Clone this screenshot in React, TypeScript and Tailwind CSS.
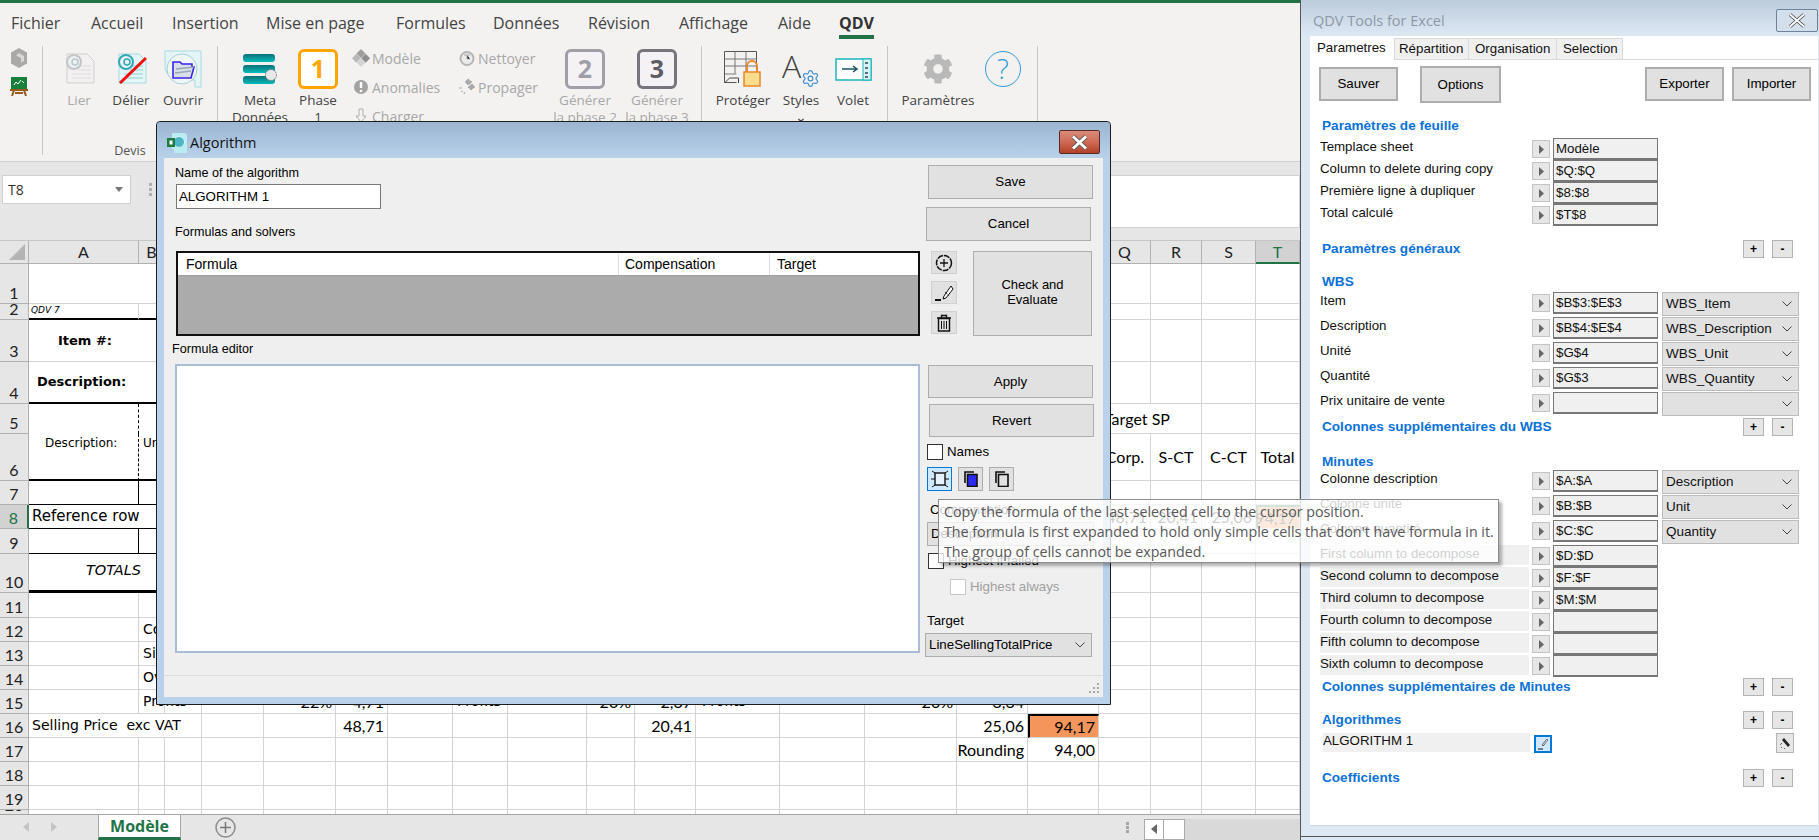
import type { ReactNode } from 'react'
import { FaCog } from 'react-icons/fa'
import { Settings } from 'lucide-react'

const sans = "font-['Liberation_Sans',Arial,sans-serif]"
const ui = "font-['Open_Sans',sans-serif]"

const COLS = 'ABCDEFGHIJKLMNOPQRST'.split('')
const ROWS = Array.from({ length: 20 }, (_, i) => i + 1)
const num = "justify-end items-center pr-[3px] font-['Lato'] text-[16px]"
const lato = "items-center font-['Lato'] text-[16px]"
const deja = "items-center font-['DejaVu_Sans'] text-[14px]"

// cell text, keyed by row-column (A = 0)
const CELLS: Record<string, { t: string; cls: string }> = {
  '2-0': { t: 'QDV 7', cls: "items-center pl-[2px] italic font-['DejaVu_Sans'] text-[9px]" },
  '3-0': { t: 'Item #:', cls: "items-center pl-[29px] font-bold font-['DejaVu_Sans'] text-[13px]" },
  '4-0': { t: 'Description:', cls: "items-center pl-[8px] pb-[1px] font-bold font-['DejaVu_Sans'] text-[13px]" },
  '6-0': { t: 'Description:', cls: "items-start pl-[16px] font-['DejaVu_Sans'] text-[12px]" },
  '6-1': { t: 'Unité', cls: "items-start pl-[4px] font-['DejaVu_Sans'] text-[12px]" },
  '8-0': { t: 'Reference row', cls: "items-center pl-[3px] font-['DejaVu_Sans'] text-[15px]" },
  '10-0': { t: 'TOTALS', cls: "items-center pl-[57px] pb-[2px] italic font-['DejaVu_Sans'] text-[14.5px]" },
  '12-1': { t: 'Costs', cls: `${deja} pl-[4px]` },
  '13-1': { t: 'Site', cls: `${deja} pl-[4px]` },
  '14-1': { t: 'Overhead', cls: `${deja} pl-[4px]` },
  '15-1': { t: 'Profits', cls: `${deja} pl-[4px]` },
  '15-4': { t: '22%', cls: num },
  '15-5': { t: '4,71', cls: num },
  '15-7': { t: 'Profits', cls: `${deja} pl-[4px]` },
  '15-9': { t: '20%', cls: num },
  '15-10': { t: '2,37', cls: num },
  '15-11': { t: 'Profits', cls: `${deja} pl-[6px]` },
  '15-13': { t: '20%', cls: num },
  '15-14': { t: '3,34', cls: num },
  '16-0': { t: 'Selling Price  exc VAT', cls: `${deja} pl-[3px] whitespace-pre text-[14.5px]` },
  '16-5': { t: '48,71', cls: num },
  '16-10': { t: '20,41', cls: num },
  '16-14': { t: '25,06', cls: num },
  '16-15': { t: '94,17', cls: `${num} bg-[#f4965b] border-2 border-black` },
  '17-14': { t: 'Rounding', cls: num },
  '17-15': { t: '94,00', cls: num },
  '5-16': { t: 'Target SP', cls: `${lato} pl-[5px]` },
  '6-16': { t: 'Corp.', cls: `${lato} justify-end pr-[6px]` },
  '6-17': { t: 'S-CT', cls: `${lato} justify-center` },
  '6-18': { t: 'C-CT', cls: `${lato} justify-center` },
  '6-19': { t: 'Total', cls: `${lato} justify-center` },
  '8-16': { t: '48,71', cls: num },
  '8-17': { t: '20,41', cls: num },
  '8-18': { t: '25,06', cls: num },
  '8-19': { t: '94,17', cls: `${num} bg-[#f4965b] border-2 border-[#217346]` },
}

function rightBorder(r: number, c: number) {
  if (c === 0) {
    if (r === 5 || r === 6) return 'border-r border-r-black [border-right-style:dashed]'
    if (r === 7 || r === 9) return 'border-r border-r-black'
    if (r === 2 || (r >= 11 && r <= 15) || r >= 17) return 'border-r border-r-[#d4d4d4]'
    return ''
  }
  if (c === 1 && r === 16) return ''
  if (c === 16 && r === 5) return ''
  return 'border-r border-r-[#d4d4d4]'
}

function bottomBorder(r: number, c: number) {
  if (r === 5 && c < 16) return ''
  if (c < 16) {
    if (r === 2 || r === 4 || r === 6) return 'border-b-2 border-b-black'
    if (r === 10) return 'border-b-[3px] border-b-black'
    if (r === 7 || r === 8 || r === 9) return 'border-b border-b-black'
  }
  return 'border-b border-b-[#d4d4d4]'
}

function Sheet() {
  return (
    <div className="h-[575px] bg-white overflow-hidden grid grid-cols-[29px_110px_26px_37px_62px_72px_52px_65px_55px_79px_48px_61px_84px_85px_92px_71px_71px_52px_51px_54px_44px] grid-rows-[23px_40px_16px_42px_42px_30px_47px_24px_24px_25px_39px_25px_24px_24px_24px_24px_24px_24px_24px_24px_6px] text-black">
      <div className="bg-[#e6e6e6] border-r border-b border-[#b1b1b1] flex items-end justify-end p-[3px]">
        <svg width="16" height="16" viewBox="0 0 16 16"><path d="M16 0v16H0z" fill="#b4b4b4" /></svg>
      </div>
      {COLS.map(c => (
        <div
          key={c}
          className={`flex items-center justify-center font-['Lato'] text-[16px] border-r border-b ${
            c === 'T' ? 'bg-[#d2d2d2] text-[#217346] border-[#b1b1b1] border-b-2 border-b-[#217346]' : 'bg-[#e6e6e6] text-[#222] border-[#b1b1b1]'
          }`}
        >
          {c}
        </div>
      ))}
      {ROWS.map(r => [
        <div
          key={`h${r}`}
          className={`flex items-end justify-center overflow-hidden font-['Lato'] text-[16px] leading-[21px] border-b border-[#b1b1b1] ${
            r === 8 ? 'bg-[#d2d2d2] text-[#217346] border-r-2 border-r-[#217346]' : 'bg-[#e6e6e6] text-[#222] border-r'
          }`}
        >
          {r}
        </div>,
        ...COLS.map((_, c) => {
          const cell = CELLS[`${r}-${c}`]
          return (
            <div key={`${r}-${c}`} className={`flex whitespace-nowrap min-w-0 ${rightBorder(r, c)} ${bottomBorder(r, c)} ${cell ? cell.cls : ''}`}>
              {cell?.t}
            </div>
          )
        }),
      ])}
    </div>
  )
}

function PageIcon({ mode }: { mode: 'off' | 'unlink' | 'open' }) {
  const edge = mode === 'off' ? '#cfcfcf' : '#a5dbe0'
  const fill = mode === 'off' ? '#f2f0f0' : '#e4f5f6'
  const ring = mode === 'off' ? '#c5c5c5' : '#35a7b5'
  if (mode === 'open') {
    return (
      <svg width="38" height="38" viewBox="0 0 38 38">
        <path d="M1 1h36v36h-6V30H20C9 30 1 26 1 15z" fill={fill} stroke={edge} />
        <circle cx="18" cy="19" r="15" fill="#eef6f7" stroke="#a5cfd6" />
        <path d="M9 12h7l2 2h10v3h2l-3 11H9z" fill="#d7dfe9" stroke="#3b22e8" strokeWidth="1.6" />
        <path d="M12 19l18-2M11 23l16-2" stroke="#9aa7b5" strokeWidth="1.5" />
      </svg>
    )
  }
  return (
    <svg width="31" height="31" viewBox="0 0 31 31">
      <path d="M3 1h20l7 7v22H3z" fill={fill} stroke={edge} />
      <path d="M14 13h13M14 17h13M8 21h19M8 25h19" stroke={mode === 'off' ? '#dedede' : '#8ad3dc'} />
      <circle cx="10" cy="9" r="7" fill="#e6f3f5" stroke={ring} strokeWidth="2" />
      <circle cx="11" cy="9" r="3" fill="none" stroke={ring} strokeWidth="1.5" />
      {mode === 'unlink' && <path d="M4 30L30 5" stroke="#f01010" strokeWidth="3" />}
    </svg>
  )
}

function MetaIcon() {
  return (
    <svg width="34" height="30" viewBox="0 0 34 30">
      <defs>
        <linearGradient id="meta" x1="0" y1="0" x2="0" y2="1">
          <stop offset="0" stopColor="#0c6f78" />
          <stop offset="1" stopColor="#04bcb8" />
        </linearGradient>
      </defs>
      <rect x="0" y="0" width="32" height="8" rx="3" fill="url(#meta)" />
      <rect x="0" y="11" width="32" height="8" rx="3" fill="url(#meta)" />
      <rect x="0" y="22" width="32" height="8" rx="3" fill="url(#meta)" />
      <circle cx="28" cy="21" r="5.5" fill="#e8e8e8" stroke="#777" strokeDasharray="1.5 1" />
    </svg>
  )
}

function LockGridIcon() {
  return (
    <svg width="38" height="36" viewBox="0 0 38 36">
      <path d="M.5.5h32v21M.5.5v31h12" fill="none" stroke="#555" />
      <path d="M11 .5v22M22 .5v22M.5 8h32M.5 15h32M.5 23h12" stroke="#777" />
      <path d="M.5 32l5-5h9v5" fill="none" stroke="#444" />
      <path d="M23 21v-6a5 5 0 0 1 10 0v6" fill="none" stroke="#e8882a" strokeWidth="2" />
      <rect x="20" y="21" width="16" height="14" fill="#f9dc8c" stroke="#e8882a" strokeWidth="1.5" />
    </svg>
  )
}

function VoletIcon() {
  return (
    <svg width="37" height="24" viewBox="0 0 37 24">
      <rect x="1" y="2" width="35" height="21" fill="#fff" stroke="#1bb5bd" strokeWidth="1.5" />
      <rect x="28" y="2" width="8" height="21" fill="#d6f2f3" stroke="#1bb5bd" />
      <path d="M30 6h3M30 11h3M30 16h3M30 20h3" stroke="#345" strokeWidth="1.5" />
      <path d="M7 12h15m-4-3l4 3-4 3" fill="none" stroke="#1d5560" strokeWidth="1.5" />
    </svg>
  )
}

function SmallIcon({ kind }: { kind: 'model' | 'warn' | 'load' | 'clean' | 'spread' }) {
  if (kind === 'warn') {
    return (
      <svg width="16" height="16" viewBox="0 0 16 16">
        <circle cx="8" cy="8" r="7" fill="#a3a3a3" />
        <path d="M8 3v6" stroke="#fff" strokeWidth="2.4" />
        <circle cx="8" cy="12" r="1.3" fill="#fff" />
      </svg>
    )
  }
  if (kind === 'clean') {
    return (
      <svg width="16" height="16" viewBox="0 0 16 16">
        <circle cx="8" cy="8.5" r="6.5" fill="#ebebeb" stroke="#b5b5b5" strokeWidth="2" />
        <path d="M5 5h6M8 5v4h3" stroke="#aaa" />
      </svg>
    )
  }
  if (kind === 'load') {
    return (
      <svg width="12" height="16" viewBox="0 0 12 16">
        <path d="M4 1h4v7h3l-5 6-5-6h3z" fill="#f3f2f1" stroke="#b0b0b0" />
      </svg>
    )
  }
  if (kind === 'spread') {
    return (
      <svg width="18" height="18" viewBox="0 0 18 18">
        <path d="M10 1l4 3-4 3-3-3zM14 6l3 3-4 3-3-3z" fill="#aaa" stroke="#999" strokeDasharray="1 1" />
        <path d="M1 10h3M3 13l2 1M6 16l1-2" stroke="#aaa" />
      </svg>
    )
  }
  return (
    <svg width="18" height="18" viewBox="0 0 18 18">
      <path d="M9 0l4.5 4.5L9 9 4.500 4.500z" fill="#9d9d9d" />
      <path d="M4.300 4.700L8.800 9.200 4.300 13.700 0 9.200z" fill="#b8b8b8" />
      <path d="M13.700 4.700L18 9.200l-4.300 4.500-4.500-4.500z" fill="#8f8f8f" />
      <path d="M9 9.400l4.300 4.400L9 18l-4.300-4.200z" fill="#d4d4d4" />
    </svg>
  )
}

function RibbonBtn({ w, icon, label, off }: { w: string; icon: ReactNode; label: ReactNode; off?: boolean }) {
  return (
    <div className={`${w} flex flex-col items-center leading-[17px] whitespace-nowrap ${off ? 'text-[#a8a8a8]' : 'text-[#444]'}`}>
      <div className="h-[46px] flex items-center justify-center">{icon}</div>
      {label}
    </div>
  )
}

function NumBox({ n, color, text, bg }: { n: string; color: string; text: string; bg: string }) {
  return (
    <div className={`w-[40px] h-[40px] rounded-[6px] border-[3px] flex items-center justify-center text-[25px] font-bold ${color} ${text} ${bg}`}>
      {n}
    </div>
  )
}

function SmallRow({ kind, label }: { kind: 'model' | 'warn' | 'load' | 'clean' | 'spread'; label: string }) {
  return (
    <div className="h-[29px] flex items-center text-[#a8a8a8] text-[14px] whitespace-nowrap">
      <span className="w-[22px] flex justify-center"><SmallIcon kind={kind} /></span>
      {label}
    </div>
  )
}

function Ribbon() {
  const tabs: [string, string][] = [
    ['Fichier', 'w-[80px]'], ['Accueil', 'w-[81px]'], ['Insertion', 'w-[94px]'], ['Mise en page', 'w-[130px]'],
    ['Formules', 'w-[97px]'], ['Données', 'w-[95px]'], ['Révision', 'w-[91px]'], ['Affichage', 'w-[99px]'], ['Aide', 'w-[61px]'],
  ]
  return (
    <div className={`h-[160px] bg-[#f3f2f1] border-b border-[#d2d0ce] overflow-hidden ${ui} text-[13.5px]`}>
      <div className="h-[43px] flex pl-[11px] pt-[10px] text-[16px] text-[#444] leading-[20px]">
        {tabs.map(([t, w]) => <div key={t} className={w}>{t}</div>)}
        <div className="h-[26px] border-b-4 border-[#217346] font-bold text-[#333]">QDV</div>
      </div>
      <div className="flex h-[109px]">
        <div className="w-[43px] border-r border-[#c8c6c4] flex flex-col items-center gap-[8px] pt-[2px] pr-[4px]">
          <svg width="18" height="20" viewBox="0 0 18 20"><path d="M9 0l8 4.500v11L9 20l-8-4.500v-11z" fill="#a9a9a9" /><path d="M9 5l5 3v5l-3 1.500V10L6 7.500z" fill="#d8d8d8" /></svg>
          <svg width="18" height="20" viewBox="0 0 18 20"><rect x="1" y="1" width="16" height="12" fill="#16803a" /><path d="M4 9l2-3 2 2 3-4M12 5l2 2" stroke="#fff" fill="none" /><path d="M0 14h18M4 14L2 20M14 14l2 6M5 17h8" stroke="#9b5a1c" strokeWidth="2" /></svg>
        </div>
        <div className="w-[175px] border-r border-[#c8c6c4] pl-[10px] flex flex-col">
          <div className="flex flex-1">
            <RibbonBtn w="w-[52px]" off icon={<PageIcon mode="off" />} label="Lier" />
            <RibbonBtn w="w-[52px]" icon={<PageIcon mode="unlink" />} label="Délier" />
            <RibbonBtn w="w-[52px]" icon={<PageIcon mode="open" />} label="Ouvrir" />
          </div>
          <div className="text-center text-[12.5px] text-[#555] -mb-[4px] leading-[17px] pr-[10px]">Devis</div>
        </div>
        <div className="w-[484px] border-r border-[#c8c6c4] pl-[12px] flex">
          <RibbonBtn w="w-[60px]" icon={<MetaIcon />} label={<><span>Meta</span><span>Données</span></>} />
          <RibbonBtn w="w-[56px]" icon={<NumBox n="1" color="border-[#ffa500]" text="text-[#ffa500]" bg="bg-white" />} label={<><span>Phase</span><span>1</span></>} />
          <div className="w-[108px] pl-[4px] -mt-[2px]">
            <SmallRow kind="model" label="Modèle" />
            <SmallRow kind="warn" label="Anomalies" />
            <SmallRow kind="load" label="Charger" />
          </div>
          <div className="w-[100px] pl-[2px] -mt-[2px]">
            <SmallRow kind="clean" label="Nettoyer" />
            <SmallRow kind="spread" label="Propager" />
          </div>
          <RibbonBtn w="w-[62px]" off icon={<NumBox n="2" color="border-[#a09ea6]" text="text-[#a09ea6]" bg="bg-[#f5f2f6]" />} label={<><span>Générer</span><span>la phase 2</span></>} />
          <RibbonBtn w="w-[82px]" off icon={<NumBox n="3" color="border-[#76747c]" text="text-[#5e5c64]" bg="bg-[#f5f2f6]" />} label={<><span>Générer</span><span>la phase 3</span></>} />
        </div>
        <div className="w-[186px] border-r border-[#c8c6c4] pl-[12px] flex">
          <RibbonBtn w="w-[58px]" icon={<LockGridIcon />} label="Protéger" />
          <RibbonBtn
            w="w-[58px]"
            icon={
              <div className="relative w-[38px] h-[38px]">
                <span className="absolute left-0 -top-[3px] text-[32px] leading-[38px] font-light text-[#444]">A</span>
                <Settings className="absolute right-0 bottom-0 w-[19px] h-[19px] text-[#3d8fd6]" strokeWidth={1.5} />
              </div>
            }
            label={<><span>Styles</span><span>⌄</span></>}
          />
          <RibbonBtn w="w-[46px]" icon={<VoletIcon />} label="Volet" />
        </div>
        <div className="w-[150px] border-r border-[#c8c6c4] pl-[10px] flex">
          <RibbonBtn w="w-[80px]" icon={<FaCog className="w-[30px] h-[30px] text-[#b9b9b9]" />} label="Paramètres" />
          <RibbonBtn
            w="w-[50px]"
            icon={
              <div className="w-[36px] h-[36px] rounded-full border border-[#2f9bdb] flex items-center justify-center text-[28px] font-light text-[#2f9bdb]">?</div>
            }
            label=""
          />
        </div>
      </div>
    </div>
  )
}

function FormulaBar() {
  return (
    <div className={`h-[79px] bg-[#e6e6e6] border-b border-[#c6c6c6] pt-[13px] flex items-start ${ui}`}>
      <div className="ml-[2px] w-[129px] h-[29px] bg-white border border-[#d0d0d0] flex items-center justify-between pl-[5px] pr-[6px] text-[14px] text-[#333]">
        T8
        <svg width="9" height="6" viewBox="0 0 9 6"><path d="M0 0h8l-4 5z" fill="#777" /></svg>
      </div>
      <div className="ml-[18px] flex flex-col gap-[2px] pt-[8px]">
        <span className="w-[3px] h-[3px] bg-[#b0b0b0]" />
        <span className="w-[3px] h-[3px] bg-[#b0b0b0]" />
        <span className="w-[3px] h-[3px] bg-[#b0b0b0]" />
      </div>
      <div className="ml-[12px] flex-1 h-[53px] bg-white border border-[#d0d0d0]" />
    </div>
  )
}

function SheetTabs() {
  return (
    <div className={`h-[26px] bg-[#e6e6e6] border-t border-[#a6a6a6] flex ${ui}`}>
      <div className="w-[98px] flex items-center gap-[22px] pl-[23px]">
        <svg width="6" height="10" viewBox="0 0 6 10"><path d="M6 0v10L0 5z" fill="#c4c4c4" /></svg>
        <svg width="6" height="10" viewBox="0 0 6 10"><path d="M0 0v10l6-5z" fill="#c4c4c4" /></svg>
      </div>
      <div className="w-[83px] h-[25px] bg-white border-b-[3px] border-[#217346] border-x border-x-[#a6a6a6] flex items-center justify-center text-[16px] font-bold text-[#217346]">Modèle</div>
      <div className="w-[88px] flex items-center justify-center">
        <svg width="21" height="21" viewBox="0 0 21 21"><circle cx="10.500" cy="10.500" r="9.500" fill="none" stroke="#8c8c8c" strokeWidth="1.500" /><path d="M10.500 5v11M5 10.500h11" stroke="#777" strokeWidth="1.500" /></svg>
      </div>
      <div className="w-[875px] flex justify-end items-center">
        <div className="flex flex-col gap-[1px] mr-[15px]">
          <span className="w-[3px] h-[3px] bg-[#a6a6a6]" />
          <span className="w-[3px] h-[3px] bg-[#a6a6a6]" />
          <span className="w-[3px] h-[3px] bg-[#a6a6a6]" />
        </div>
      </div>
      <div className="flex-1 bg-[#d9d9d9] mt-[4px] flex items-stretch">
        <div className="w-[20px] bg-white border border-[#ababab] flex items-center justify-center">
          <svg width="6" height="10" viewBox="0 0 6 10"><path d="M6 0v10L0 5z" fill="#666" /></svg>
        </div>
        <div className="w-[21px] bg-white border border-l-0 border-[#ababab]" />
      </div>
    </div>
  )
}

function WinBtn({ className, children }: { className: string; children: ReactNode }) {
  return (
    <div className={`bg-[#e1e1e1] border border-[#adadad] flex items-center justify-center text-center text-black ${className}`}>{children}</div>
  )
}

function Chevron() {
  return (
    <svg width="10" height="6" viewBox="0 0 10 6" className="shrink-0 ml-auto"><path d="M.5.5L5 5 9.500.5" fill="none" stroke="#444" /></svg>
  )
}

function Check({ className = '', label, muted }: { className?: string; label?: string; muted?: boolean }) {
  return (
    <div className={`h-[16px] leading-[16px] flex items-center gap-[4px] ${className}`}>
      <span className={`w-[16px] h-[16px] bg-white border ${muted ? 'border-[#c8c8c8]' : 'border-[#333]'}`} />
      {label && <span className={muted ? 'text-[#a0a0a0]' : ''}>{label}</span>}
    </div>
  )
}

function CopyIcon({ front }: { front: string }) {
  return (
    <svg width="14" height="16" viewBox="0 0 14 16">
      <path d="M1 12V1h9" fill="none" stroke="#111" strokeWidth="1.600" />
      <rect x="3.500" y="3.500" width="9.500" height="12" fill={front} stroke="#111" strokeWidth="1.600" />
    </svg>
  )
}

function AlgoDialog() {
  return (
    <div className={`absolute left-[156px] top-[121px] w-[955px] h-[584px] z-10 flex flex-col border border-[#1d1d1d] rounded-t-[4px] bg-[#b9d1ea] text-[13.3px] text-black ${sans}`}>
      <div className="h-[36px] shrink-0 rounded-t-[4px] bg-gradient-to-b from-[#9bb5d2] to-[#b9d2ea] flex items-center pl-[10px] pr-[10px] pt-[5px]">
        <svg width="20" height="20" viewBox="0 0 20 20" className="mr-[3px]">
          <path d="M5 0h13l2 2v18H7v-4H5z" fill="#b8ebf2" />
          <circle cx="12" cy="9" r="5.500" fill="#4db5c4" stroke="#e2f5f7" />
          <rect x="0" y="5" width="8" height="9" fill="#1f7a44" />
          <rect x="2.500" y="7.500" width="3" height="4" fill="#fff" />
        </svg>
        <span className={`text-[14.5px] text-[#111] ${ui}`}>Algorithm</span>
        <div className="ml-auto -mt-[1px] w-[41px] h-[24px] rounded-[2px] border border-[#5a2a22] bg-gradient-to-b from-[#d98b7c] via-[#cf6a55] to-[#b1412a] flex items-center justify-center">
          <svg width="17" height="15" viewBox="0 0 17 15"><path d="M2 1.500l13 12M15 1.500l-13 12" stroke="#555" strokeWidth="4.500" /><path d="M2 1.500l13 12M15 1.500l-13 12" stroke="#fff" strokeWidth="3" /></svg>
        </div>
      </div>
      <div className="mx-[7px] mb-[7px] flex-1 bg-[#efefef] flex flex-col">
        <div className="flex h-[517px]">
          <div className="w-[760px] shrink-0 flex flex-col text-[12.6px]">
            <div className="ml-[11px] mt-[8px] h-[14px] leading-[14px]">Name of the algorithm</div>
            <div className="ml-[12px] mt-[4px] w-[205px] h-[25px] bg-white border border-[#7a7a7a] flex items-center pl-[2px] text-[13.3px]">ALGORITHM 1</div>
            <div className="ml-[11px] mt-[16px] h-[14px] leading-[14px]">Formulas and solvers</div>
            <div className="ml-[12px] mt-[12px] w-[744px] h-[85px] border-2 border-[#111] bg-[#ababab] flex flex-col">
              <div className="h-[23px] bg-white border-b border-[#a0a0a0] flex items-center text-[14px] pt-[1px]">
                <div className="w-[441px] h-full pl-[8px] flex items-center border-r border-[#e0e0e0]">Formula</div>
                <div className="w-[151px] h-full pl-[6px] flex items-center border-r border-[#e0e0e0]">Compensation</div>
                <div className="pl-[7px]">Target</div>
              </div>
            </div>
            <div className="ml-[8px] mt-[6px] h-[14px] leading-[14px]">Formula editor</div>
            <div className="ml-[11px] mt-[8px] w-[745px] h-[289px] bg-white border-2 border-[#a9bdd7]" />
          </div>
          <div className="flex-1 flex flex-col min-w-0">
            <WinBtn className="mt-[7px] ml-[4px] w-[165px] h-[34px]">Save</WinBtn>
            <WinBtn className="mt-[8px] ml-[2px] w-[165px] h-[34px]">Cancel</WinBtn>
            <div className="mt-[10px] ml-[7px] flex gap-[16px]">
              <div className="w-[26px] flex flex-col gap-[7px]">
                <WinBtn className="h-[23px] border-[#d0d0d0] bg-[#dcdcdc]">
                  <svg width="18" height="18" viewBox="0 0 18 18"><circle cx="9" cy="9" r="7.500" fill="none" stroke="#111" strokeWidth="1.500" strokeDasharray="6 1" /><path d="M9 5v8M5 9h8" stroke="#111" strokeWidth="1.300" /></svg>
                </WinBtn>
                <WinBtn className="h-[23px] border-[#d0d0d0] bg-[#dcdcdc]">
                  <svg width="20" height="18" viewBox="0 0 20 18"><path d="M1 16h6" stroke="#111" strokeWidth="2" /><path d="M10 12l-1 3 3-1 7-9-2-3z" fill="#fff" stroke="#111" /><path d="M11 8l4 4" stroke="#111" strokeDasharray="1 1" /></svg>
                </WinBtn>
                <WinBtn className="h-[23px] border-[#d0d0d0] bg-[#dcdcdc]">
                  <svg width="16" height="18" viewBox="0 0 16 18">
                    <path d="M1 4h14M5.500 4V1.500h5V4" fill="none" stroke="#111" strokeWidth="1.400" />
                    <path d="M2.500 4.500h11V17h-11z" fill="none" stroke="#111" strokeWidth="1.400" />
                    <path d="M5.500 7v8M8 7v8M10.500 7v8" stroke="#111" />
                  </svg>
                </WinBtn>
              </div>
              <WinBtn className="w-[119px] h-[85px] leading-[15px] pb-[4px] text-[13px]">Check and<br />Evaluate</WinBtn>
            </div>
            <WinBtn className="mt-[29px] ml-[4px] w-[165px] h-[33px]">Apply</WinBtn>
            <WinBtn className="mt-[6px] ml-[5px] w-[165px] h-[33px]">Revert</WinBtn>
            <Check className="mt-[7px] ml-[3px]" label="Names" />
            <div className="mt-[7px] ml-[3px] flex gap-[6px]">
              <div className="w-[25px] h-[24px] bg-[#cde8ff] border border-[#0078d7] flex items-center justify-center">
                <svg width="18" height="18" viewBox="0 0 18 18">
                  <rect x="4" y="3" width="10" height="12" fill="#e6f3fb" stroke="#111" strokeWidth="1.400" />
                  <path d="M1 1l3 2M17 1l-3 2M1 17l3-2M17 17l-3-2M0 9h4M14 9h4" stroke="#111" />
                </svg>
              </div>
              <WinBtn className="w-[25px] h-[24px]"><CopyIcon front="#2a2af0" /></WinBtn>
              <WinBtn className="w-[25px] h-[24px]"><CopyIcon front="#e1e1e1" /></WinBtn>
            </div>
            <div className="mt-[12px] ml-[6px] h-[14px] leading-[14px]">Compensation</div>
            <div className="mt-[5px] ml-[3px] w-[167px] h-[24px] bg-[#e1e1e1] border border-[#adadad] flex items-center pl-[3px] pr-[6px]">
              Description <Chevron />
            </div>
            <Check className="mt-[7px] ml-[4px]" label="Highest if failed" />
            <Check className="mt-[10px] ml-[26px]" label="Highest always" muted />
            <div className="mt-[19px] ml-[3px] h-[14px] leading-[14px]">Target</div>
            <div className="mt-[5px] ml-[1px] w-[167px] h-[24px] bg-[#e1e1e1] border border-[#adadad] flex items-center pl-[3px] pr-[6px]">
              LineSellingTotalPrice <Chevron />
            </div>
          </div>
        </div>
        <div className="flex-1 border-t border-[#dcdcdc] flex items-end justify-end pr-[3px] pb-[3px]">
          <svg width="12" height="12" viewBox="0 0 12 12"><path d="M9 1h2v2H9zM5 5h2v2H5zM9 5h2v2H9zM1 9h2v2H1zM5 9h2v2H5zM9 9h2v2H9z" fill="#aaa" /></svg>
        </div>
      </div>
    </div>
  )
}

function Arrow() {
  return (
    <div className="w-[18px] h-[18px] shrink-0 bg-[#e6e6e6] border border-[#c4c4c4] flex items-center justify-center">
      <svg width="5" height="9" viewBox="0 0 5 9"><path d="M0 0v9l5-4.500z" fill="#666" /></svg>
    </div>
  )
}

function Heading({ t, plus, className = '' }: { t: string; plus?: boolean; className?: string }) {
  return (
    <div className={`h-[18px] flex items-center pl-[12px] pr-[25px] ${className}`}>
      <span className="font-bold text-[#0b72d8] leading-[16px] text-[13.6px]">{t}</span>
      {plus && (
        <div className="ml-auto flex gap-[8px] text-[12px] font-bold">
          <WinBtn className="w-[21px] h-[18px] border-[#b4b4b4] bg-[#e6e6e6]">+</WinBtn>
          <WinBtn className="w-[21px] h-[18px] border-[#b4b4b4] bg-[#e6e6e6]">-</WinBtn>
        </div>
      )}
    </div>
  )
}

function Row({ label, value, select, tall, shaded }: { label: string; value?: string; select?: string; tall?: boolean; shaded?: boolean }) {
  return (
    <div className={`flex items-start ${tall ? 'h-[25px]' : 'h-[22px]'}`}>
      <div className={`w-[222px] shrink-0 pl-[10px] ${shaded ? '' : 'pt-[1px]'}`}>
        <div className={`leading-[16px] h-[20px] whitespace-nowrap ${shaded ? 'bg-[#f0f0f0] w-[209px] pt-[1px]' : ''}`}>{label}</div>
      </div>
      <div className="mt-[2px]"><Arrow /></div>
      <div className="ml-[3px] w-[105px] h-[22px] shrink-0 bg-[#f0f0f0] border border-[#777] border-b-2 flex items-center pl-[2px]">{value}</div>
      {select !== undefined && (
        <div className="ml-[4px] w-[137px] h-[24px] shrink-0 bg-[#e1e1e1] border border-[#bcbcbc] flex items-center pl-[3px] pr-[6px] text-[13.5px]">
          {select} <Chevron />
        </div>
      )}
    </div>
  )
}

function ToolPanel() {
  return (
    <div className={`w-[519px] h-[840px] z-0 flex flex-col bg-[#dde8f4] border-l border-[#555] text-[13.3px] text-[#111] ${sans}`}>
      <div className="h-[36px] shrink-0 bg-gradient-to-b from-[#bcccdc] to-[#dde8f4] flex items-start pl-[12px]">
        <span className={`mt-[11px] text-[14.5px] leading-[20px] text-[#8d98a4] ${ui}`}>QDV Tools for Excel</span>
        <div className="ml-auto mt-[9px] mr-[1px] w-[42px] h-[23px] border border-[#6d829b] rounded-[2px] bg-[#d4dfec] flex items-center justify-center">
          <svg width="18" height="15" viewBox="0 0 18 15"><path d="M2 1.500l14 12M16 1.500l-14 12" stroke="#444" strokeWidth="3.500" /><path d="M2 1.500l14 12M16 1.500l-14 12" stroke="#fff" strokeWidth="2" /></svg>
        </div>
      </div>
      <div className="ml-[9px] mr-[1px] h-[790px] shrink-0 bg-white border-b border-[#cfd8e2] flex flex-col">
        <div className="h-[24px] flex items-end border-b border-[#d9d9d9]">
          <div className="w-[84px] h-[24px] bg-white pl-[7px] leading-[23px] -mb-px">Parametres</div>
          <div className="w-[75px] h-[21px] bg-[#f0f0f0] border border-b-0 border-[#d9d9d9] pl-[4px] leading-[20px]">Répartition</div>
          <div className="w-[88px] h-[21px] bg-[#f0f0f0] border-r border-t border-[#d9d9d9] pl-[6px] leading-[20px]">Organisation</div>
          <div className="w-[66px] h-[21px] bg-[#f0f0f0] border-r border-t border-[#d9d9d9] pl-[6px] leading-[20px]">Selection</div>
        </div>
        <div className="mt-[6px] h-[37px] flex items-start pl-[9px] pr-[7px]">
          <WinBtn className="mt-[1px] w-[79px] h-[34px] border-2 border-[#a8a8a8]">Sauver</WinBtn>
          <WinBtn className="ml-[22px] w-[81px] h-[37px] border-2 border-[#a8a8a8]">Options</WinBtn>
          <WinBtn className="ml-auto mt-[1px] w-[79px] h-[34px] border-2 border-[#a8a8a8]">Exporter</WinBtn>
          <WinBtn className="ml-[8px] mt-[1px] w-[79px] h-[34px] border-2 border-[#a8a8a8]">Importer</WinBtn>
        </div>
        <Heading t="Paramètres de feuille" className="mt-[14px]" />
        <div className="mt-[3px]">
          <Row label="Templace sheet" value="Modèle" />
          <Row label="Column to delete during copy" value="$Q:$Q" />
          <Row label="Première ligne à dupliquer" value="$8:$8" />
          <Row label="Total calculé" value="$T$8" />
        </div>
        <Heading t="Paramètres généraux" plus className="mt-[14px]" />
        <Heading t="WBS" className="mt-[15px]" />
        <div className="mt-[1px]">
          <Row tall label="Item" value="$B$3:$E$3" select="WBS_Item" />
          <Row tall label="Description" value="$B$4:$E$4" select="WBS_Description" />
          <Row tall label="Unité" value="$G$4" select="WBS_Unit" />
          <Row tall label="Quantité" value="$G$3" select="WBS_Quantity" />
          <Row tall label="Prix unitaire de vente" select="" />
        </div>
        <Heading t="Colonnes supplémentaires du WBS" plus className="mt-[1px]" />
        <Heading t="Minutes" className="mt-[17px]" />
        <div className="mt-[-1px]">
          <Row tall label="Colonne description" value="$A:$A" select="Description" />
          <Row tall label="Colonne unité" value="$B:$B" select="Unit" />
          <Row tall label="Colonne quantité" value="$C:$C" select="Quantity" />
          <Row shaded label="First column to decompose" value="$D:$D" />
          <Row shaded label="Second column to decompose" value="$F:$F" />
          <Row shaded label="Third column to decompose" value="$M:$M" />
          <Row shaded label="Fourth column to decompose" />
          <Row shaded label="Fifth column to decompose" />
          <Row shaded label="Sixth column to decompose" />
        </div>
        <Heading t="Colonnes supplémentaires de Minutes" plus className="mt-[1px]" />
        <Heading t="Algorithmes" plus className="mt-[15px]" />
        <div className="mt-[4px] h-[21px] flex items-start pl-[13px]">
          <div className="w-[207px] h-[19px] bg-[#f0f0f0] leading-[16px]">ALGORITHM 1</div>
          <div className="ml-[4px] mt-[2px] w-[18px] h-[18px] bg-[#cde8ff] border-2 border-[#0078d7] flex items-center justify-center">
            <svg width="12" height="12" viewBox="0 0 12 12"><path d="M1 11h5" stroke="#111" /><path d="M6 8l5-6-1-1-5 6z" fill="#fff" stroke="#111" strokeDasharray="1 .5" /></svg>
          </div>
          <div className="ml-[224px] w-[18px] h-[20px] bg-[#e6e6e6] border border-[#b4b4b4] flex items-center justify-center">
            <svg width="12" height="13" viewBox="0 0 12 13"><path d="M5 1l6 7-2 2-6-7z" fill="#222" /><path d="M3 6l-2 2M2 10l1 1M5 11l1 1" stroke="#222" strokeDasharray="1 1" /></svg>
          </div>
        </div>
        <Heading t="Coefficients" plus className="mt-[15px]" />
      </div>
      <div className="h-[11px] shrink-0 border-b border-[#555]" />
    </div>
  )
}

function Tooltip() {
  return (
    <div className={`absolute left-[938px] top-[499px] w-[561px] h-[64px] z-20 bg-white/80 border border-[#8c8c8c] shadow-[3px_3px_3px_rgba(0,0,0,0.3)] pl-[5px] pt-[2px] text-[14.25px] leading-[20px] text-[#575757] whitespace-nowrap ${ui}`}>
      <div>Copy the formula of the last selected cell to the cursor position.</div>
      <div>The formula is first expanded to hold only simple cells that don't have formula in it.</div>
      <div>The group of cells cannot be expanded.</div>
    </div>
  )
}

export default function App() {
  return (
    <div className="relative w-[1819px] h-[840px] overflow-hidden flex bg-white">
      <div className="w-[1300px] shrink-0 flex flex-col">
        <div className="h-[3px] bg-[#217346]" />
        <Ribbon />
        <FormulaBar />
        <Sheet />
        <SheetTabs />
      </div>
      <ToolPanel />
      <AlgoDialog />
      <Tooltip />
    </div>
  )
}
